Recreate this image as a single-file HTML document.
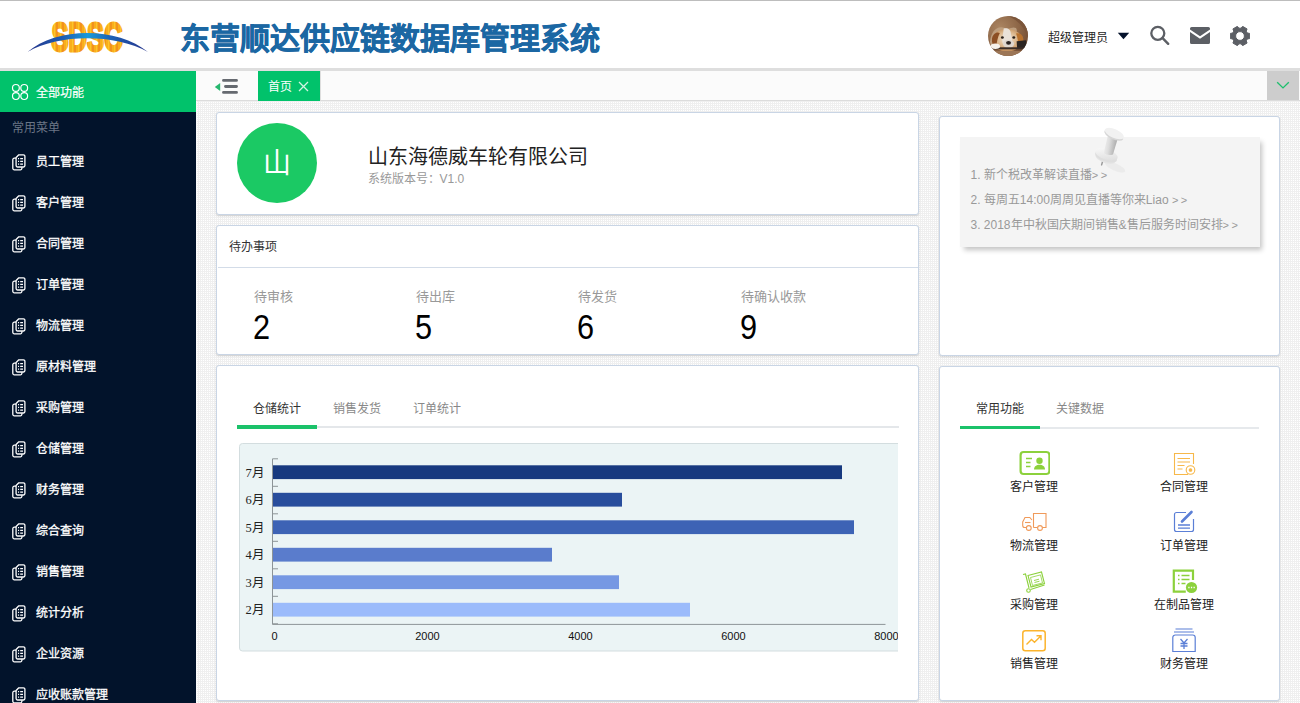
<!DOCTYPE html>
<html lang="zh-CN">
<head>
<meta charset="utf-8">
<title>东营顺达供应链数据库管理系统</title>
<style>
*{box-sizing:border-box;margin:0;padding:0}
html,body{width:1300px;height:703px;overflow:hidden}
body{font-family:"Liberation Sans",sans-serif;font-size:12px;color:#333;background:#efefef conic-gradient(#fff 25%,transparent 0) 0 0/2px 2px;position:relative}
.abs{position:absolute}
#header{position:absolute;left:0;top:0;width:1300px;height:68px;background:#fff;border-top:2px solid #fff}
#hborder{position:absolute;left:0;top:68px;width:1300px;height:3px;background:#dedede}
#title{position:absolute;left:180px;top:19px;font-size:30px;-webkit-text-stroke:0.6px #1b67a3;font-weight:bold;color:#1b67a3;letter-spacing:0px;white-space:nowrap;line-height:36px}
#sidebar{position:absolute;left:0;top:71px;width:196px;height:632px;background:#02132b;overflow:hidden}
#allfn{position:absolute;left:0;top:0;width:196px;height:41px;background:#01c26b;color:#fff;font-size:12px;line-height:44px;padding-left:36px;-webkit-text-stroke:0.2px #fff}
#cmenu{position:absolute;left:11.700px;top:48.500px;font-size:12px;color:#6b7686;line-height:16px}
.mi{position:absolute;left:0;width:196px;height:41px;color:#fff;font-size:12px;line-height:41px;padding-left:36px;white-space:nowrap;-webkit-text-stroke:0.3px #fff}
.mi svg{position:absolute;left:12px;top:11.500px}
#tabbar{position:absolute;left:196px;top:71px;width:1104px;height:30px;background:#fbfbfb;border-bottom:1px solid #dcdcdc}
#tab1{position:absolute;left:62px;top:0;width:62px;height:30px;background:#01c26b;color:#fff;font-size:12px;line-height:33px;padding-left:10px}
#tabdd{position:absolute;left:1071px;top:0;width:32px;height:29px;background:#cdcdcd}
.card{position:absolute;background:#fff;border:1px solid #c9d5e5;border-radius:3px;box-shadow:0 1px 2px rgba(0,0,0,.14)}
.card>*{margin-left:1px;margin-top:1px}
.tabt{font-size:12px;line-height:16px;white-space:nowrap}
.nt{left:29.500px;font-size:12px;line-height:16px;color:#999;white-space:nowrap}
.fi{position:absolute;width:120px;text-align:center;font-size:12px;line-height:16px;color:#222;white-space:nowrap}
.fi svg{display:block;margin:0 auto}
.fi{margin-left:1px;margin-top:1px}
.gg{letter-spacing:2.500px;font-size:11px}
</style>
</head>
<body>
<div id="header">
  <div class="abs" style="left:0;top:-2px;width:1300px;height:1px;background:#bdbdbd"></div>
  <svg id="logo" class="abs" style="left:26px;top:14px" width="126" height="44" viewBox="0 0 126 44">
    <defs>
      <linearGradient id="lg1" x1="0" y1="0" x2="1" y2="0" gradientUnits="objectBoundingBox" spreadMethod="repeat">
        <stop offset="0" stop-color="#f5a21d"/><stop offset="0.5" stop-color="#fbb81e"/><stop offset="1" stop-color="#f08c1b"/>
      </linearGradient>
      <pattern id="stripe" width="6" height="44" patternUnits="userSpaceOnUse">
        <rect width="6" height="44" fill="#f9ae1c"/><rect x="0" width="2" height="44" fill="#f2921c"/><rect x="4" width="1" height="44" fill="#fcc42a"/>
      </pattern>
      <linearGradient id="arcg" x1="0" y1="0" x2="1" y2="0">
        <stop offset="0" stop-color="#27348b"/><stop offset="0.3" stop-color="#1d5fb4"/><stop offset="0.5" stop-color="#1a9ad9"/><stop offset="0.7" stop-color="#1d5fb4"/><stop offset="1" stop-color="#27348b"/>
      </linearGradient>
    </defs>
    <text x="61" y="35" text-anchor="middle" font-family="Liberation Sans, sans-serif" font-weight="bold" font-size="41.500" textLength="71" lengthAdjust="spacingAndGlyphs" fill="url(#stripe)" stroke="url(#stripe)" stroke-width="2.800" stroke-linejoin="round">SDSC</text>
    <path d="M1.500 36 C 30 10.500, 92 10.500, 122 36 C 90 17.500, 32 17.500, 1.500 36 Z" fill="url(#arcg)"/>
  </svg>
  <div id="title">东营顺达供应链数据库管理系统</div>
  <svg class="abs" style="left:988px;top:14px" width="40" height="40" viewBox="0 0 40 40">
    <defs><clipPath id="avc"><circle cx="20" cy="20" r="20"/></clipPath>
    <radialGradient id="avbg" cx="0.300" cy="0.300" r="0.800"><stop offset="0" stop-color="#ab8562"/><stop offset="0.600" stop-color="#8c6546"/><stop offset="1" stop-color="#744d33"/></radialGradient>
    <radialGradient id="avhd" cx="0.500" cy="0.450" r="0.600"><stop offset="0" stop-color="#f1e7da"/><stop offset="0.550" stop-color="#dcb88e"/><stop offset="1" stop-color="#b9804a"/></radialGradient></defs>
    <g clip-path="url(#avc)">
      <rect width="40" height="40" fill="url(#avbg)"/>
      <path d="M20 0 C30 4 37 12 40 22 V0 Z" fill="#7b553a"/>
      <path d="M2 26 C3 14 10 9 17 12 C22 14 24 10 28 12 C31 17 25 19 19 20 C11 22 7 27 4 33 Z" fill="#bd9e7e"/>
      <g transform="translate(-2.200 -6) scale(1.120)"><ellipse cx="19" cy="27" rx="13.500" ry="10" fill="url(#avhd)"/>
      <path d="M5.500 26 C6 21 10 19 12.500 20.500 C10.500 24 10 29 9 33 C6.500 32 5.200 29.500 5.500 26 Z" fill="#8c4f24"/>
      <path d="M27 21 C31 20 34 23 33.500 28 C33 31 31 33 29 33 C29 29 28.500 24.500 27 21 Z" fill="#b8722f"/>
      <path d="M16 16.500 C20 15.500 22.500 17.500 22.500 22 C23.500 27 25 31.500 20.500 33 C15.500 33.500 14 29 15 24 Z" fill="#e9e1d8"/>
      <ellipse cx="20.300" cy="30.200" rx="5" ry="3.600" fill="#ded6ce"/>
      <ellipse cx="20.300" cy="29.300" rx="2.200" ry="1.700" fill="#2b2422"/>
      <ellipse cx="14.800" cy="24.500" rx="1.300" ry="1.100" fill="#2a2019"/><ellipse cx="25" cy="24.500" rx="1.300" ry="1.100" fill="#2a2019"/>
      <path d="M27.500 28 L36 27 L37 34 L28 34 Z" fill="#2b2522"/>
      <rect x="6" y="33.300" width="31" height="1.800" fill="#3a2d26"/>
      <ellipse cx="8.500" cy="32.300" rx="4.200" ry="2.500" fill="#f6f1ea"/></g>
      <path d="M0 35 H40 V40 H0 Z" fill="#9c7656"/>
    </g>
  </svg>
  <div class="abs" style="left:1048px;top:27.5px;font-size:12px;line-height:17px;color:#1e1e1e;white-space:nowrap">超级管理员</div>
  <svg class="abs" style="left:1117px;top:29.8px" width="13" height="8" viewBox="0 0 13 8"><path d="M0.8 0.7h11.4L6.5 7.2z" fill="#04122b"/></svg>
  <svg class="abs" style="left:1149px;top:23px" width="22" height="22" viewBox="0 0 22 22" fill="none" stroke="#5c5f65"><circle cx="8.8" cy="8.3" r="6.5" stroke-width="2.300"/><path d="M13.6 13.2l5.6 5.6" stroke-width="2.4" stroke-linecap="round"/></svg>
  <svg class="abs" style="left:1190px;top:25px" width="20" height="17" viewBox="0 0 20 17"><path d="M1.6 0h16.8a1.6 1.6 0 0 1 1.6 1.6v0.9L10 9.3 0 2.5V1.6A1.6 1.6 0 0 1 1.600 0z M0 4.9l10 6.8 10-6.800V15.400a1.600 1.600 0 0 1-1.600 1.600H1.600A1.600 1.600 0 0 1 0 15.400z" fill="#5c5f65"/></svg>
  <svg class="abs" style="left:1230px;top:23.700px" width="20" height="20" viewBox="-10 -10 20 20"><path fill="#5c5f65" fill-rule="evenodd" stroke="#5c5f65" stroke-width="1" stroke-linejoin="round" d="M7.32 -2.96 L9.66 -2.59 L9.66 2.59 L7.32 2.96 L6.23 4.86 L7.07 7.07 L2.59 9.66 L1.10 7.82 L-1.10 7.82 L-2.59 9.66 L-7.07 7.07 L-6.23 4.86 L-7.32 2.96 L-9.66 2.59 L-9.66 -2.59 L-7.32 -2.96 L-6.23 -4.86 L-7.07 -7.07 L-2.59 -9.66 L-1.10 -7.82 L1.10 -7.82 L2.59 -9.66 L7.07 -7.07 L6.23 -4.86z M4.4 0a4.400 4.400 0 1 0-8.800 0a4.400 4.400 0 1 0 8.800 0z"/></svg>
</div>
<div id="hborder"></div>
<div id="sidebar">
  <div id="allfn"><svg class="abs" style="left:11px;top:12px" width="18" height="18" viewBox="0 0 18 18" fill="none" stroke="#fff" stroke-width="1.200"><circle cx="4.900" cy="4.900" r="3.400"/><circle cx="13.200" cy="4.900" r="3.400"/><circle cx="4.900" cy="13.100" r="3.400"/><circle cx="13.200" cy="13.100" r="3.400"/></svg>全部功能</div>
  <div id="cmenu">常用菜单</div>
  <div class="mi" style="top:71px"><svg width="14" height="17" viewBox="0 0 14 17" fill="none" stroke="#fff" stroke-width="1.3" stroke-linejoin="round"><path d="M6.8 0.8h4.6a1.5 1.5 0 0 1 1.5 1.5v9.2a1.5 1.5 0 0 1-1.5 1.5H5.6a1.5 1.5 0 0 1-1.5-1.5V3.5z"/><path d="M4 4.2H2.3a1.5 1.5 0 0 0-1.5 1.5v8.6a1.5 1.5 0 0 0 1.5 1.5h6.1a1.5 1.5 0 0 0 1.5-1.5v-1"/><path d="M6 4.7h1.1M8.2 4.7h2.8M6 7.4h1.1M8.2 7.4h2.8M6 10.1h1.1M8.2 10.1h2.8" stroke-width="1.2"/></svg>员工管理</div>
  <div class="mi" style="top:112px"><svg width="14" height="17" viewBox="0 0 14 17" fill="none" stroke="#fff" stroke-width="1.3" stroke-linejoin="round"><path d="M6.8 0.8h4.6a1.5 1.5 0 0 1 1.5 1.5v9.2a1.5 1.5 0 0 1-1.5 1.5H5.6a1.5 1.5 0 0 1-1.5-1.5V3.5z"/><path d="M4 4.2H2.3a1.5 1.5 0 0 0-1.5 1.5v8.6a1.5 1.5 0 0 0 1.5 1.5h6.1a1.5 1.5 0 0 0 1.5-1.5v-1"/><path d="M6 4.7h1.1M8.2 4.7h2.8M6 7.4h1.1M8.2 7.4h2.8M6 10.1h1.1M8.2 10.1h2.8" stroke-width="1.2"/></svg>客户管理</div>
  <div class="mi" style="top:153px"><svg width="14" height="17" viewBox="0 0 14 17" fill="none" stroke="#fff" stroke-width="1.3" stroke-linejoin="round"><path d="M6.8 0.8h4.6a1.5 1.5 0 0 1 1.5 1.5v9.2a1.5 1.5 0 0 1-1.5 1.5H5.6a1.5 1.5 0 0 1-1.5-1.5V3.5z"/><path d="M4 4.2H2.3a1.5 1.5 0 0 0-1.5 1.5v8.6a1.5 1.5 0 0 0 1.5 1.5h6.1a1.5 1.5 0 0 0 1.5-1.5v-1"/><path d="M6 4.7h1.1M8.2 4.7h2.8M6 7.4h1.1M8.2 7.4h2.8M6 10.1h1.1M8.2 10.1h2.8" stroke-width="1.2"/></svg>合同管理</div>
  <div class="mi" style="top:194px"><svg width="14" height="17" viewBox="0 0 14 17" fill="none" stroke="#fff" stroke-width="1.3" stroke-linejoin="round"><path d="M6.8 0.8h4.6a1.5 1.5 0 0 1 1.5 1.5v9.2a1.5 1.5 0 0 1-1.5 1.5H5.6a1.5 1.5 0 0 1-1.5-1.5V3.5z"/><path d="M4 4.2H2.3a1.5 1.5 0 0 0-1.5 1.5v8.6a1.5 1.5 0 0 0 1.5 1.5h6.1a1.5 1.5 0 0 0 1.5-1.5v-1"/><path d="M6 4.7h1.1M8.2 4.7h2.8M6 7.4h1.1M8.2 7.4h2.8M6 10.1h1.1M8.2 10.1h2.8" stroke-width="1.2"/></svg>订单管理</div>
  <div class="mi" style="top:235px"><svg width="14" height="17" viewBox="0 0 14 17" fill="none" stroke="#fff" stroke-width="1.3" stroke-linejoin="round"><path d="M6.8 0.8h4.6a1.5 1.5 0 0 1 1.5 1.5v9.2a1.5 1.5 0 0 1-1.5 1.5H5.6a1.5 1.5 0 0 1-1.5-1.5V3.5z"/><path d="M4 4.2H2.3a1.5 1.5 0 0 0-1.5 1.5v8.6a1.5 1.5 0 0 0 1.5 1.5h6.1a1.5 1.5 0 0 0 1.5-1.5v-1"/><path d="M6 4.7h1.1M8.2 4.7h2.8M6 7.4h1.1M8.2 7.4h2.8M6 10.1h1.1M8.2 10.1h2.8" stroke-width="1.2"/></svg>物流管理</div>
  <div class="mi" style="top:276px"><svg width="14" height="17" viewBox="0 0 14 17" fill="none" stroke="#fff" stroke-width="1.3" stroke-linejoin="round"><path d="M6.8 0.8h4.6a1.5 1.5 0 0 1 1.5 1.5v9.2a1.5 1.5 0 0 1-1.5 1.5H5.6a1.5 1.5 0 0 1-1.5-1.5V3.5z"/><path d="M4 4.2H2.3a1.5 1.5 0 0 0-1.5 1.5v8.6a1.5 1.5 0 0 0 1.5 1.5h6.1a1.5 1.5 0 0 0 1.5-1.5v-1"/><path d="M6 4.7h1.1M8.2 4.7h2.8M6 7.4h1.1M8.2 7.4h2.8M6 10.1h1.1M8.2 10.1h2.8" stroke-width="1.2"/></svg>原材料管理</div>
  <div class="mi" style="top:317px"><svg width="14" height="17" viewBox="0 0 14 17" fill="none" stroke="#fff" stroke-width="1.3" stroke-linejoin="round"><path d="M6.8 0.8h4.6a1.5 1.5 0 0 1 1.5 1.5v9.2a1.5 1.5 0 0 1-1.5 1.5H5.6a1.5 1.5 0 0 1-1.5-1.5V3.5z"/><path d="M4 4.2H2.3a1.5 1.5 0 0 0-1.5 1.5v8.6a1.5 1.5 0 0 0 1.5 1.5h6.1a1.5 1.5 0 0 0 1.5-1.5v-1"/><path d="M6 4.7h1.1M8.2 4.7h2.8M6 7.4h1.1M8.2 7.4h2.8M6 10.1h1.1M8.2 10.1h2.8" stroke-width="1.2"/></svg>采购管理</div>
  <div class="mi" style="top:358px"><svg width="14" height="17" viewBox="0 0 14 17" fill="none" stroke="#fff" stroke-width="1.3" stroke-linejoin="round"><path d="M6.8 0.8h4.6a1.5 1.5 0 0 1 1.5 1.5v9.2a1.5 1.5 0 0 1-1.5 1.5H5.6a1.5 1.5 0 0 1-1.5-1.5V3.5z"/><path d="M4 4.2H2.3a1.5 1.5 0 0 0-1.5 1.5v8.6a1.5 1.5 0 0 0 1.5 1.5h6.1a1.5 1.5 0 0 0 1.5-1.5v-1"/><path d="M6 4.7h1.1M8.2 4.7h2.8M6 7.4h1.1M8.2 7.4h2.8M6 10.1h1.1M8.2 10.1h2.8" stroke-width="1.2"/></svg>仓储管理</div>
  <div class="mi" style="top:399px"><svg width="14" height="17" viewBox="0 0 14 17" fill="none" stroke="#fff" stroke-width="1.3" stroke-linejoin="round"><path d="M6.8 0.8h4.6a1.5 1.5 0 0 1 1.5 1.5v9.2a1.5 1.5 0 0 1-1.5 1.5H5.6a1.5 1.5 0 0 1-1.5-1.5V3.5z"/><path d="M4 4.2H2.3a1.5 1.5 0 0 0-1.5 1.5v8.6a1.5 1.5 0 0 0 1.5 1.5h6.1a1.5 1.5 0 0 0 1.5-1.5v-1"/><path d="M6 4.7h1.1M8.2 4.7h2.8M6 7.4h1.1M8.2 7.4h2.8M6 10.1h1.1M8.2 10.1h2.8" stroke-width="1.2"/></svg>财务管理</div>
  <div class="mi" style="top:440px"><svg width="14" height="17" viewBox="0 0 14 17" fill="none" stroke="#fff" stroke-width="1.3" stroke-linejoin="round"><path d="M6.8 0.8h4.6a1.5 1.5 0 0 1 1.5 1.5v9.2a1.5 1.5 0 0 1-1.5 1.5H5.6a1.5 1.5 0 0 1-1.5-1.5V3.5z"/><path d="M4 4.2H2.3a1.5 1.5 0 0 0-1.5 1.5v8.6a1.5 1.5 0 0 0 1.5 1.5h6.1a1.5 1.5 0 0 0 1.5-1.5v-1"/><path d="M6 4.7h1.1M8.2 4.7h2.8M6 7.4h1.1M8.2 7.4h2.8M6 10.1h1.1M8.2 10.1h2.8" stroke-width="1.2"/></svg>综合查询</div>
  <div class="mi" style="top:481px"><svg width="14" height="17" viewBox="0 0 14 17" fill="none" stroke="#fff" stroke-width="1.3" stroke-linejoin="round"><path d="M6.8 0.8h4.6a1.5 1.5 0 0 1 1.5 1.5v9.2a1.5 1.5 0 0 1-1.5 1.5H5.6a1.5 1.5 0 0 1-1.5-1.5V3.5z"/><path d="M4 4.2H2.3a1.5 1.5 0 0 0-1.5 1.5v8.6a1.5 1.5 0 0 0 1.5 1.5h6.1a1.5 1.5 0 0 0 1.5-1.5v-1"/><path d="M6 4.7h1.1M8.2 4.7h2.8M6 7.4h1.1M8.2 7.4h2.8M6 10.1h1.1M8.2 10.1h2.8" stroke-width="1.2"/></svg>销售管理</div>
  <div class="mi" style="top:522px"><svg width="14" height="17" viewBox="0 0 14 17" fill="none" stroke="#fff" stroke-width="1.3" stroke-linejoin="round"><path d="M6.8 0.8h4.6a1.5 1.5 0 0 1 1.5 1.5v9.2a1.5 1.5 0 0 1-1.5 1.5H5.6a1.5 1.5 0 0 1-1.5-1.5V3.5z"/><path d="M4 4.2H2.3a1.5 1.5 0 0 0-1.5 1.5v8.6a1.5 1.5 0 0 0 1.5 1.5h6.1a1.5 1.5 0 0 0 1.5-1.5v-1"/><path d="M6 4.7h1.1M8.2 4.7h2.8M6 7.4h1.1M8.2 7.4h2.8M6 10.1h1.1M8.2 10.1h2.8" stroke-width="1.2"/></svg>统计分析</div>
  <div class="mi" style="top:563px"><svg width="14" height="17" viewBox="0 0 14 17" fill="none" stroke="#fff" stroke-width="1.3" stroke-linejoin="round"><path d="M6.8 0.8h4.6a1.5 1.5 0 0 1 1.5 1.5v9.2a1.5 1.5 0 0 1-1.5 1.5H5.6a1.5 1.5 0 0 1-1.5-1.5V3.5z"/><path d="M4 4.2H2.3a1.5 1.5 0 0 0-1.5 1.5v8.6a1.5 1.5 0 0 0 1.5 1.5h6.1a1.5 1.5 0 0 0 1.5-1.5v-1"/><path d="M6 4.7h1.1M8.2 4.7h2.8M6 7.4h1.1M8.2 7.4h2.8M6 10.1h1.1M8.2 10.1h2.8" stroke-width="1.2"/></svg>企业资源</div>
  <div class="mi" style="top:604px"><svg width="14" height="17" viewBox="0 0 14 17" fill="none" stroke="#fff" stroke-width="1.3" stroke-linejoin="round"><path d="M6.8 0.8h4.6a1.5 1.5 0 0 1 1.5 1.5v9.2a1.5 1.5 0 0 1-1.5 1.5H5.6a1.5 1.5 0 0 1-1.5-1.5V3.5z"/><path d="M4 4.2H2.3a1.5 1.5 0 0 0-1.5 1.5v8.6a1.5 1.5 0 0 0 1.5 1.5h6.1a1.5 1.5 0 0 0 1.5-1.5v-1"/><path d="M6 4.7h1.1M8.2 4.7h2.8M6 7.4h1.1M8.2 7.4h2.8M6 10.1h1.1M8.2 10.1h2.8" stroke-width="1.2"/></svg>应收账款管理</div>
</div>
<div id="tabbar">
  <svg class="abs" style="left:18px;top:6px" width="26" height="18" viewBox="0 0 26 18"><path d="M9.500 3.400h13M11.500 9.500h11M9.500 15.400h13" stroke="#666a70" stroke-width="2.900" stroke-linecap="round"/><path d="M6.200 6v8L0.800 10z" fill="#27b86f"/></svg>
  <div id="tab1">首页<svg class="abs" style="left:40px;top:10px" width="11" height="11" viewBox="0 0 11 11"><path d="M1 1l9 9M10 1l-9 9" stroke="#d4f3e3" stroke-width="1.300"/></svg></div>
  <div class="abs" style="left:124px;top:0;width:1px;height:29px;background:#dedede"></div>
  <div id="tabdd"><svg class="abs" style="left:9px;top:9.500px" width="14" height="9" viewBox="0 0 14 9"><path d="M1.200 1.300l5.800 5.600 5.800-5.600" fill="none" stroke="#1dbf6d" stroke-width="1.400"/></svg></div>
</div>
<div class="abs" style="left:196px;top:101px;width:1px;height:602px;background:#fbfbfb"></div>
<div id="main">
  <div class="card" id="c1" style="left:216px;top:112px;width:703px;height:103px">
    <div class="abs" style="left:19px;top:9px;width:80px;height:80px;border-radius:50%;background:#1bc964;color:#fff;font-size:28px;line-height:82px;text-align:center">山</div>
    <div class="abs" style="left:149.5px;top:29px;font-size:20px;line-height:28px;color:#222;white-space:nowrap">山东海德威车轮有限公司</div>
    <div class="abs" style="left:149.5px;top:56.7px;font-size:12px;line-height:16px;color:#999;white-space:nowrap">系统版本号：V1.0</div>
  </div>
  <div class="card" id="c2" style="left:216px;top:225px;width:703px;height:130px">
    <div class="abs" style="left:11px;top:12px;font-size:12px;line-height:16px;color:#333">待办事项</div>
    <div class="abs" style="left:0;top:40px;width:700px;height:1px;background:#d3dce8"></div>
    <div class="abs" style="left:36px;top:60.5px;font-size:13px;line-height:18px;color:#999;white-space:nowrap">待审核</div>
    <div class="abs" style="left:35px;top:82px;font-size:32px;line-height:36px;color:#000;white-space:nowrap;transform:scale(0.96,1.11);transform-origin:0 55%">2</div>
    <div class="abs" style="left:198px;top:60.5px;font-size:13px;line-height:18px;color:#999;white-space:nowrap">待出库</div>
    <div class="abs" style="left:197px;top:82px;font-size:32px;line-height:36px;color:#000;white-space:nowrap;transform:scale(0.96,1.11);transform-origin:0 55%">5</div>
    <div class="abs" style="left:360px;top:60.5px;font-size:13px;line-height:18px;color:#999;white-space:nowrap">待发货</div>
    <div class="abs" style="left:359px;top:82px;font-size:32px;line-height:36px;color:#000;white-space:nowrap;transform:scale(0.96,1.11);transform-origin:0 55%">6</div>
    <div class="abs" style="left:523px;top:60.5px;font-size:13px;line-height:18px;color:#999;white-space:nowrap">待确认收款</div>
    <div class="abs" style="left:522px;top:82px;font-size:32px;line-height:36px;color:#000;white-space:nowrap;transform:scale(0.96,1.11);transform-origin:0 55%">9</div>
  </div>
  <div class="card" id="c3" style="left:216px;top:365px;width:703px;height:336px;overflow:hidden">
    <div class="abs" style="left:19px;top:59px;width:662px;height:2px;background:#e4e7ea"></div>
    <div class="abs" style="left:19px;top:58px;width:80px;height:3.500px;background:#1bc26a"></div>
    <div class="abs tabt" style="left:35px;top:33.500px;color:#333">仓储统计</div>
    <div class="abs tabt" style="left:115px;top:33.500px;color:#888">销售发货</div>
    <div class="abs tabt" style="left:195px;top:33.500px;color:#888">订单统计</div>
    <div class="abs" style="left:21px;top:76px;width:659px;height:209px;overflow:hidden"><svg class="abs" style="left:0;top:0" width="660" height="209" viewBox="0 0 660 209">
      <rect x="0.5" y="0.5" width="670" height="207.500" rx="3" fill="#ebf4f5" stroke="#d3dddf"/>
      <path d="M33.5 15.8V181.4H646.5" fill="none" stroke="#8d9497" stroke-width="1"/>
      <path d="M33.5 15.8h5.500M33.5 43.3h5.500M33.5 70.8h5.500M33.5 98.3h5.500M33.5 125.8h5.500M33.5 153.3h5.500M33.5 180.8h5.500" stroke="#8d9497" stroke-width="1" fill="none"/>
      <rect x="34" y="22.3" width="569" height="13.800" fill="#17397f"/>
      <text x="16" y="33.8" text-anchor="middle" font-family="Liberation Serif, serif" font-size="12.500" fill="#222">7月</text>
      <rect x="34" y="49.8" width="349" height="13.800" fill="#284d9c"/>
      <text x="16" y="61.3" text-anchor="middle" font-family="Liberation Serif, serif" font-size="12.500" fill="#222">6月</text>
      <rect x="34" y="77.3" width="581" height="13.800" fill="#3d63b5"/>
      <text x="16" y="88.8" text-anchor="middle" font-family="Liberation Serif, serif" font-size="12.500" fill="#222">5月</text>
      <rect x="34" y="104.8" width="279" height="13.800" fill="#5a7ccc"/>
      <text x="16" y="116.3" text-anchor="middle" font-family="Liberation Serif, serif" font-size="12.500" fill="#222">4月</text>
      <rect x="34" y="132.3" width="346" height="13.800" fill="#7698e3"/>
      <text x="16" y="143.8" text-anchor="middle" font-family="Liberation Serif, serif" font-size="12.500" fill="#222">3月</text>
      <rect x="34" y="159.8" width="417" height="13.800" fill="#9bbbfb"/>
      <text x="16" y="171.3" text-anchor="middle" font-family="Liberation Serif, serif" font-size="12.500" fill="#222">2月</text>
      <text x="35.5" y="196.500" text-anchor="middle" font-family="Liberation Sans, sans-serif" font-size="11" fill="#111">0</text>
      <text x="188.5" y="196.500" text-anchor="middle" font-family="Liberation Sans, sans-serif" font-size="11" fill="#111">2000</text>
      <text x="341.5" y="196.500" text-anchor="middle" font-family="Liberation Sans, sans-serif" font-size="11" fill="#111">4000</text>
      <text x="494.5" y="196.500" text-anchor="middle" font-family="Liberation Sans, sans-serif" font-size="11" fill="#111">6000</text>
      <text x="647.5" y="196.500" text-anchor="middle" font-family="Liberation Sans, sans-serif" font-size="11" fill="#111">8000</text>
    </svg></div>
  </div>
  <div class="card" id="c4" style="left:939px;top:116px;width:341px;height:240px">
    <div class="abs" style="left:19px;top:19px;width:300px;height:110px;background:#f4f4f4;box-shadow:3px 4px 5px -1px rgba(0,0,0,.24)"></div>
    <svg class="abs" style="left:150px;top:8px" width="40" height="52" viewBox="0 0 40 52">
      <defs>
        <linearGradient id="pg1" x1="0" y1="0" x2="1" y2="0.200"><stop offset="0" stop-color="#f3f3f3"/><stop offset="0.450" stop-color="#dcdcdc"/><stop offset="1" stop-color="#a9a9a9"/></linearGradient>
        <linearGradient id="pg2" x1="0" y1="0" x2="1" y2="1"><stop offset="0" stop-color="#fbfbfb"/><stop offset="1" stop-color="#dadada"/></linearGradient>
      </defs>
      <ellipse cx="24" cy="41" rx="11" ry="3.600" fill="#e7e7e7" opacity="0.700" transform="rotate(24 24 41)"/>
      <path d="M11.900 34.500l-1.300 4.400" stroke="#9a9a9a" stroke-width="1.500" stroke-linecap="round"/>
      <ellipse cx="14.600" cy="32.300" rx="10.500" ry="4.600" fill="#e4e4e4" transform="rotate(18 14.600 32.300)"/>
      <ellipse cx="15" cy="30.600" rx="11.500" ry="5" fill="#dedede" transform="rotate(18 15 30.600)"/>
      <ellipse cx="15.400" cy="28.400" rx="11.800" ry="5.200" fill="url(#pg2)" transform="rotate(18 15.400 28.400)"/>
      <path d="M16.600 10.500 L12.800 27 Q16.500 30 22 28.500 L26.600 13 Z" fill="url(#pg1)"/>
      <ellipse cx="22.800" cy="9" rx="10.200" ry="4.400" fill="#d6d6d6" transform="rotate(24 22.800 9)"/>
      <ellipse cx="23.300" cy="7.500" rx="10.200" ry="4.400" fill="#f1f1f1" transform="rotate(24 23.300 7.500)"/>
    </svg>
    <div class="abs nt" style="top:49px">1. 新个税改革解读直播<span class="gg">&gt;&gt;</span></div>
    <div class="abs nt" style="top:73.600px">2. 每周五14:00周周见直播等你来Liao <span class="gg">&gt;&gt;</span></div>
    <div class="abs nt" style="top:98.700px">3. 2018年中秋国庆期间销售&amp;售后服务时间安排<span class="gg">&gt;&gt;</span></div>
  </div>
  <div class="card" id="c5" style="left:939px;top:366px;width:341px;height:335px">
    <div class="abs" style="left:19px;top:59px;width:299px;height:2px;background:#e6e9ec"></div>
    <div class="abs" style="left:19px;top:58px;width:80px;height:3px;background:#1bc26a"></div>
    <div class="abs tabt" style="left:35px;top:33px;color:#333">常用功能</div>
    <div class="abs tabt" style="left:115px;top:33px;color:#888">关键数据</div>
    <div class="fi" style="left:33px;top:82px"><svg width="32" height="26" viewBox="-1 0 32 26"><rect x="1.600" y="2" width="28.800" height="22" rx="3" fill="none" stroke="#8cd13c" stroke-width="2.200"/><path d="M7 8.500h6M7 12.500h4.500M7 16.500h4.500" stroke="#8cd13c" stroke-width="1.600"/><circle cx="20.500" cy="10.800" r="3.200" fill="#8cd13c"/><path d="M15 19.500c0-3.200 2.500-4.800 5.500-4.800s5.500 1.600 5.500 4.800z" fill="#8cd13c"/></svg><div style="margin-top:3px">客户管理</div></div>
    <div class="fi" style="left:183px;top:82px"><svg width="32" height="26" viewBox="0 0 32 26" fill="none" stroke="#f7b84a" stroke-width="1.100"><path d="M25.500 14V3.500h-19v21h13.500"/><path d="M9.500 8.500h12.500M9.500 12h12.500M9.500 15.500h7M9.500 19h5"/><circle cx="22.500" cy="20" r="4.300"/><circle cx="22.500" cy="20" r="1.300" fill="#f7b84a"/></svg><div style="margin-top:3px">合同管理</div></div>
    <div class="fi" style="left:33px;top:141px"><svg width="32" height="26" viewBox="0 0 32 26" fill="none" stroke="#f09a5a" stroke-width="1.100"><path d="M15.500 18.500V4.500h12.500v14h-3.500M19.500 18.500h-4M9 18.500h-2.300c-1.200 0-2-0.800-2-2v-3.500l2.300-4.500h4.800l2.200 2.500"/><path d="M7 13.500h5.500"/><circle cx="10.800" cy="19" r="2.400"/><circle cx="22" cy="19" r="2.400"/></svg><div style="margin-top:3px">物流管理</div></div>
    <div class="fi" style="left:183px;top:141px"><svg width="32" height="26" viewBox="0 0 32 26" fill="none" stroke="#5b7fd6"><path d="M18 3.500H8.500a2 2 0 0 0-2 2v15a2 2 0 0 0 2 2h15a2 2 0 0 0 2-2V10" stroke-width="1.200"/><path d="M14 12.500L23.500 3" stroke-width="2.600" stroke-linecap="round"/><path d="M10 16h12M10 19.200h12" stroke-width="1.300"/></svg><div style="margin-top:3px">订单管理</div></div>
    <div class="fi" style="left:33px;top:200px"><svg width="32" height="26" viewBox="0 -1 32 26" fill="none" stroke="#8cd13c" stroke-width="1.100"><path d="M5 5.500l2.500-0.500 3.500 14"/><circle cx="10.500" cy="21.500" r="1.800"/><path d="M12.500 20.500l14-4.500"/><path d="M10 6.500l13.500-3.500 3 11.500-13.500 3.500z"/><path d="M12.500 8.500l10-2.600 2 8-10 2.600z" stroke-width="0.800"/><path d="M16 11.500l5-1.300M16.500 13.500l5-1.300" stroke-width="0.900"/></svg><div style="margin-top:3px">采购管理</div></div>
    <div class="fi" style="left:183px;top:200px"><svg width="32" height="26" viewBox="0 0 32 26" fill="none" stroke="#8cd13c"><path d="M25 12V2.600H5.800v21h12" stroke-width="2.200"/><path d="M10 7.500h1.500M13.500 7.500h8M10 11.500h1.500M13.500 11.500h8M10 15.500h1.500M13.500 15.500h4" stroke-width="1.300"/><circle cx="23.500" cy="19.500" r="5.600" fill="#8cd13c" stroke="none"/><path d="M20.300 19.500h1.300M22.900 19.500h1.300M25.500 19.500h1.300" stroke="#fff" stroke-width="1.500"/></svg><div style="margin-top:3px">在制品管理</div></div>
    <div class="fi" style="left:33px;top:259px"><svg width="32" height="26" viewBox="0 -1 32 26" fill="none" stroke="#fbb42e" stroke-width="1.500"><rect x="4.800" y="2.800" width="22.400" height="20" rx="2.500"/><path d="M8.500 16.500l5-5 3 2.800 6.500-6.500M18.500 7.800h4.500v4.500" stroke-width="1.400"/></svg><div style="margin-top:3px">销售管理</div></div>
    <div class="fi" style="left:183px;top:259px"><svg width="32" height="26" viewBox="0 -1 32 26" fill="none" stroke="#5b7fd6" stroke-width="1.200"><path d="M7.500 1h17M6 4h20"/><path d="M4.800 23.500V9.500a2.500 2.500 0 0 1 2.500-2.500h17.400a2.500 2.500 0 0 1 2.500 2.500v14z"/><path d="M12.500 11l3.500 4 3.500-4M16 15v6M12.500 15.500h7M12.500 18h7" stroke-width="1.300"/></svg><div style="margin-top:3px">财务管理</div></div>
  </div>
</div>
</body>
</html>
